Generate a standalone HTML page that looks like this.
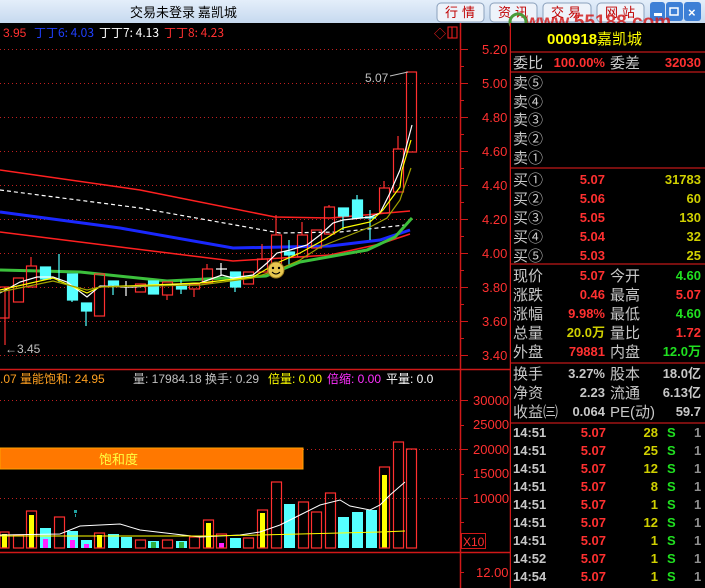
<!DOCTYPE html>
<html><head><meta charset="utf-8"><style>
html,body{margin:0;padding:0;background:#000;width:705px;height:588px;overflow:hidden}
svg{display:block}
text{font-family:"Liberation Sans","Noto Sans CJK SC",sans-serif}
.c{font-family:"Noto Sans CJK SC","WenQuanYi Zen Hei",sans-serif}
</style></head><body>
<svg width="705" height="588" viewBox="0 0 705 588" xmlns="http://www.w3.org/2000/svg">
<defs><linearGradient id="tb" x1="0" y1="0" x2="0" y2="1"><stop offset="0" stop-color="#e4eefa"/><stop offset="1" stop-color="#c6d9ef"/></linearGradient></defs>
<rect width="705" height="588" fill="#000"/>
<!-- title bar -->
<rect x="0" y="0" width="705" height="23" fill="url(#tb)"/>
<text x="130" y="17" font-size="13" fill="#000" class="c">交易未登录 嘉凯城</text>
<g font-size="13" fill="#c00000" class="c">
<rect x="437" y="3" width="47" height="19" rx="4" fill="#eef3fa" stroke="#8aa0bc"/><text x="445" y="17" letter-spacing="4">行情</text>
<rect x="490" y="3" width="47" height="19" rx="4" fill="#eef3fa" stroke="#8aa0bc"/><text x="498" y="17" letter-spacing="4">资讯</text>
<rect x="543" y="3" width="48" height="19" rx="4" fill="#eef3fa" stroke="#8aa0bc"/><text x="551" y="17" letter-spacing="4">交易</text>
<rect x="597" y="3" width="47" height="19" rx="4" fill="#eef3fa" stroke="#8aa0bc"/><text x="605" y="17" letter-spacing="4">网站</text>
</g>
<rect x="650" y="2" width="15" height="19" rx="3" fill="#3d7fd6"/><rect x="654" y="13" width="8" height="3" fill="#fff"/>
<rect x="666" y="2" width="17" height="19" rx="3" fill="#3d7fd6"/><rect x="670" y="8" width="8" height="7" fill="none" stroke="#fff" stroke-width="1.5"/>
<rect x="684" y="2" width="17" height="19" rx="3" fill="#3d7fd6"/><text x="688" y="17" font-size="13" fill="#fff" font-weight="bold">×</text>
<text x="525" y="28" font-size="19" font-weight="bold" fill="#d42020" opacity="0.85">www.55188.com</text>
<circle cx="518" cy="22" r="8" fill="none" stroke="#4a9a3a" stroke-width="3"/>

<!-- main chart header -->
<g font-size="12">
<text x="3" y="37" fill="#ff3030">3.95</text>
<text x="34" y="37" fill="#2040ff" class="c">丁丁6: 4.03</text>
<text x="99" y="37" fill="#fff" class="c">丁丁7: 4.13</text>
<text x="164" y="37" fill="#ff3030" class="c">丁丁8: 4.23</text>
</g>
<text x="434" y="38" font-size="12" fill="#ff2020">◇</text>
<rect x="448" y="27" width="9" height="11" fill="none" stroke="#ff2020"/><line x1="452" y1="27" x2="452" y2="38" stroke="#ff2020"/>

<!-- grid -->
<g stroke="#c02020" stroke-dasharray="1,3" stroke-width="1">
<line x1="0" y1="49.5" x2="460" y2="49.5"/><line x1="0" y1="83.5" x2="460" y2="83.5"/><line x1="0" y1="117.5" x2="460" y2="117.5"/><line x1="0" y1="151.5" x2="460" y2="151.5"/><line x1="0" y1="185.5" x2="460" y2="185.5"/><line x1="0" y1="219.5" x2="460" y2="219.5"/><line x1="0" y1="253.5" x2="460" y2="253.5"/><line x1="0" y1="287.5" x2="460" y2="287.5"/><line x1="0" y1="321.5" x2="460" y2="321.5"/><line x1="0" y1="355.5" x2="460" y2="355.5"/>
<line x1="0" y1="400.5" x2="460" y2="400.5"/><line x1="303" y1="449.5" x2="460" y2="449.5"/><line x1="0" y1="498.5" x2="460" y2="498.5"/>
</g>
<!-- axis -->
<g stroke="#d01818" stroke-width="1.5">
<line x1="460.5" y1="23" x2="460.5" y2="588"/>
<line x1="510.5" y1="23" x2="510.5" y2="588"/>
<line x1="0" y1="369.5" x2="510" y2="369.5"/>
<line x1="0" y1="552.5" x2="510" y2="552.5"/>
</g>
<g stroke="#d01818">
<path d="M460 49.5h8M460 66.5h4M460 83.5h8M460 100.5h4M460 117.5h8M460 134.5h4M460 151.5h8M460 168.5h4M460 185.5h8M460 202.5h4M460 219.5h8M460 236.5h4M460 253.5h8M460 270.5h4M460 287.5h8M460 304.5h4M460 321.5h8M460 338.5h4M460 355.5h8M460 400.5h8M460 425.5h4M460 449.5h8M460 474.5h4M460 498.5h8M460 522.5h4M460 572.5h4"/>
</g>
<g font-size="13" fill="#ff3030">
<text x="482" y="54">5.20</text><text x="482" y="88">5.00</text><text x="482" y="122">4.80</text><text x="482" y="156">4.60</text><text x="482" y="190">4.40</text><text x="482" y="224">4.20</text><text x="482" y="258">4.00</text><text x="482" y="292">3.80</text><text x="482" y="326">3.60</text><text x="482" y="360">3.40</text>
<text x="473" y="405">30000</text><text x="473" y="429">25000</text><text x="473" y="454">20000</text><text x="473" y="478">15000</text><text x="473" y="503">10000</text>
<text x="476" y="577">12.00</text>
</g>
<rect x="461.5" y="533.5" width="24" height="15" fill="none" stroke="#d01818"/><text x="463" y="546" font-size="12" fill="#ff3030">X10</text>

<!-- long MAs -->
<polyline points="0,170 140,190 275,217 330,218 410,211" fill="none" stroke="#ff2020" stroke-width="1.5"/>
<polyline points="0,190 140,208 280,233 340,232 405,225" fill="none" stroke="#fff" stroke-width="1.2" stroke-dasharray="4,3"/>
<polyline points="0,212 120,228 233,248 330,246 380,240 410,230" fill="none" stroke="#1a28ff" stroke-width="3"/>
<polyline points="0,232 120,247 233,261 330,255 380,244 410,234" fill="none" stroke="#ff2020" stroke-width="1.5"/>
<polyline points="0,270 80,272 167,281 266,276 300,262 367,250 395,237 412,218" fill="none" stroke="#3cc03c" stroke-width="3"/>

<!-- candles -->
<g stroke-width="1.2">
<g stroke="#ff3030" fill="none">
<line x1="5" y1="287" x2="5" y2="345"/><rect x="-1" y="287" width="10" height="31"/>
<rect x="13.5" y="278" width="10" height="24"/>
<line x1="31" y1="257" x2="31" y2="266"/><rect x="26.5" y="266" width="10" height="21"/>
<rect x="94.5" y="274" width="10" height="42"/>
<rect x="135.5" y="284" width="10" height="8"/>
<line x1="167" y1="295" x2="167" y2="300"/><rect x="162.5" y="282" width="10" height="13"/>
<line x1="194" y1="289" x2="194" y2="297"/><rect x="189.5" y="284" width="10" height="5"/>
<line x1="207" y1="264" x2="207" y2="269"/><rect x="202.5" y="269" width="10" height="14"/>
<rect x="243.5" y="272" width="10" height="12"/>
<line x1="262" y1="244" x2="262" y2="259"/><rect x="257.5" y="259" width="10" height="13"/>
<line x1="276" y1="215" x2="276" y2="235"/><rect x="271.5" y="235" width="10" height="33"/>
<line x1="302" y1="222" x2="302" y2="235"/><rect x="297.5" y="235" width="10" height="22"/>
<rect x="311.5" y="230" width="10" height="18"/>
<line x1="329" y1="205" x2="329" y2="207"/><rect x="324.5" y="207" width="10" height="27"/>
<line x1="384" y1="181" x2="384" y2="188"/><rect x="379.5" y="188" width="10" height="25"/>
<line x1="398" y1="136" x2="398" y2="149"/><rect x="393.5" y="149" width="10" height="43"/>
<rect x="406.5" y="72" width="10" height="80"/>
</g>
<g stroke="#55ffff" fill="#55ffff">
<line x1="59" y1="254" x2="59" y2="282"/><rect x="40.5" y="267" width="10" height="12"/>
<line x1="72" y1="274" x2="72" y2="302"/><rect x="67.5" y="274" width="10" height="26"/>
<line x1="86" y1="303" x2="86" y2="326"/><rect x="81.5" y="303" width="10" height="8"/>
<line x1="113" y1="281" x2="113" y2="295"/><rect x="108.5" y="281" width="10" height="4"/>
<rect x="148.5" y="281" width="10" height="13"/>
<line x1="181" y1="280" x2="181" y2="294"/><rect x="176.5" y="286" width="10" height="3"/>
<line x1="235" y1="272" x2="235" y2="292"/><rect x="230.5" y="272" width="10" height="15"/>
<line x1="289" y1="240" x2="289" y2="265"/><rect x="284.5" y="252" width="10" height="3"/>
<line x1="343" y1="208" x2="343" y2="230"/><rect x="338.5" y="208" width="10" height="8"/>
<line x1="357" y1="195" x2="357" y2="200"/><rect x="352.5" y="200" width="10" height="18"/>
<line x1="370" y1="210" x2="370" y2="240"/><rect x="365.5" y="217" width="10" height="1"/>
</g>
<g stroke="#fff"><path d="M121 287h11M126 281v15M216 269h11M221 263v13"/></g>
</g>
<!-- short MAs -->
<polyline points="0,293 20,282 37,277 53,277 67,282 87,297 100,286 133,287 200,283 222,275 233,278 253,275 267,263 277,253 290,250 307,245 320,235 333,223 343,220 370,217 380,213 390,193 400,170 402,163 412,125" fill="none" stroke="#fff" stroke-width="1.2"/>
<polyline points="0,290 53,278 87,293 100,287 200,283 253,277 277,263 300,253 320,242 343,228 370,222 383,210 400,187 402,170 411,140" fill="none" stroke="#ffff00" stroke-width="1.2"/>
<polyline points="0,292 53,281 87,290 100,287 200,285 253,278 277,270 300,260 320,247 370,227 387,218 400,200 405,185 411,168" fill="none" stroke="#a0a000" stroke-width="1.2"/>
<circle cx="276" cy="270" r="8" fill="#e8c850" stroke="#a08020"/><circle cx="273" cy="268" r="1.2" fill="#000"/><circle cx="279" cy="268" r="1.2" fill="#000"/><path d="M272 272q4 4 8 0" stroke="#000" fill="none"/>
<text x="5" y="353" font-size="12" fill="#c0c0c0">←3.45</text>
<text x="365" y="82" font-size="12" fill="#c0c0c0">5.07</text><line x1="390" y1="76" x2="408" y2="72" stroke="#c0c0c0"/>

<!-- volume header -->
<g font-size="12" class="c">
<text x="0" y="383" fill="#ffa020">.07 量能饱和: 24.95</text>
<text x="133" y="383" fill="#c0c0c0">量: 17984.18 换手: 0.29</text>
<text x="268" y="383" fill="#ffff00">倍量: 0.00</text>
<text x="327" y="383" fill="#ff30ff">倍缩: 0.00</text>
<text x="386" y="383" fill="#fff">平量: 0.0</text>
</g>
<rect x="0" y="448" width="303" height="21" fill="#ff7800" stroke="#ffa000"/>
<text x="99" y="464" font-size="13" fill="#ffff40" class="c">饱和度</text>
<!-- volume bars -->
<g stroke-width="1.2">
<g fill="#55ffff">
<rect x="40" y="528" width="11" height="20"/><rect x="67" y="531" width="11" height="17"/><rect x="81" y="540" width="11" height="8"/><rect x="108" y="534" width="11" height="14"/><rect x="121" y="537" width="11" height="11"/><rect x="148" y="541" width="11" height="7"/><rect x="176" y="541" width="11" height="7"/><rect x="230" y="538" width="11" height="10"/><rect x="284" y="504" width="11" height="44"/><rect x="338" y="517" width="11" height="31"/><rect x="352" y="512" width="11" height="36"/><rect x="366" y="510" width="11" height="38"/>
</g>
<g fill="#ff20ff"><rect x="43" y="539" width="5" height="9"/><rect x="70" y="540" width="5" height="8"/><rect x="84" y="544" width="5" height="4"/><rect x="219" y="543" width="5" height="5"/></g>
<g fill="#30b040"><rect x="151" y="542" width="5" height="6"/><rect x="179" y="542" width="5" height="6"/></g>
<g fill="#ffff00"><rect x="2" y="534" width="5" height="14"/><rect x="29" y="515" width="5" height="33"/><rect x="97" y="535" width="5" height="13"/><rect x="206" y="523" width="5" height="25"/><rect x="260" y="513" width="5" height="35"/><rect x="382" y="475" width="5" height="73"/></g>
<g fill="none" stroke="#ff3030">
<rect x="0" y="532" width="9" height="16"/><rect x="13.5" y="535" width="10" height="13"/><rect x="26.5" y="511" width="10" height="37"/><rect x="54.5" y="517" width="10" height="31"/><rect x="94.5" y="533" width="10" height="15"/><rect x="135.5" y="540" width="10" height="8"/><rect x="162.5" y="540" width="10" height="8"/><rect x="189.5" y="537" width="10" height="11"/><rect x="203.5" y="520" width="10" height="28"/><rect x="216.5" y="534" width="10" height="14"/><rect x="243.5" y="538" width="10" height="10"/><rect x="257.5" y="510" width="10" height="38"/><rect x="271.5" y="482" width="10" height="66"/><rect x="298.5" y="502" width="10" height="46"/><rect x="311.5" y="512" width="10" height="36"/><rect x="325.5" y="493" width="10" height="55"/><rect x="379.5" y="467" width="10" height="81"/><rect x="393.5" y="442" width="10" height="106"/><rect x="406.5" y="449" width="10" height="99"/>
</g>
</g>
<polyline points="0,535 60,534 80,526 120,524 140,530 200,537 240,535 260,532 280,525 300,515 320,505 340,500 350,506 370,510 380,505 390,495 405,482" fill="none" stroke="#fff" stroke-width="1"/>
<polyline points="0,536 200,536 260,535 300,534 340,533 380,532 405,531" fill="none" stroke="#ffff00" stroke-width="1"/>
<rect x="74" y="510" width="3" height="3" fill="#20a0a0"/><rect x="75" y="514" width="1" height="3" fill="#20a0a0"/>

<!-- right panel -->
<rect x="511" y="23" width="194" height="565" fill="#000"/>
<text x="547" y="44" font-size="15" font-weight="bold" fill="#ffff00">000918</text>
<text x="597" y="44" font-size="15" fill="#ffff00" class="c">嘉凯城</text>
<g stroke="#c01818" stroke-width="1.2">
<line x1="511" y1="52" x2="705" y2="52"/><line x1="511" y1="72" x2="705" y2="72"/><line x1="511" y1="168" x2="705" y2="168"/><line x1="511" y1="264" x2="705" y2="264"/><line x1="511" y1="363" x2="705" y2="363"/><line x1="511" y1="423" x2="705" y2="423"/>
</g>
<g font-size="15" fill="#c8c8c8" class="c">
<text x="513" y="68">委比</text><text x="610" y="68">委差</text>
<text x="513" y="88">卖⑤</text><text x="513" y="107">卖④</text><text x="513" y="125">卖③</text><text x="513" y="144">卖②</text><text x="513" y="163">卖①</text>
<text x="513" y="185">买①</text><text x="513" y="204">买②</text><text x="513" y="223">买③</text><text x="513" y="242">买④</text><text x="513" y="261">买⑤</text>
<text x="513" y="281">现价</text><text x="610" y="281">今开</text>
<text x="513" y="300">涨跌</text><text x="610" y="300">最高</text>
<text x="513" y="319">涨幅</text><text x="610" y="319">最低</text>
<text x="513" y="338">总量</text><text x="610" y="338">量比</text>
<text x="513" y="357">外盘</text><text x="610" y="357">内盘</text>
<text x="513" y="379">换手</text><text x="610" y="379">股本</text>
<text x="513" y="398">净资</text><text x="610" y="398">流通</text>
<text x="513" y="417">收益㈢</text><text x="610" y="417">PE(动)</text>
</g>
<g font-size="13" font-weight="bold" text-anchor="end">
<text x="605" y="67" fill="#ff3030">100.00%</text><text x="701" y="67" fill="#ff3030">32030</text>
<g fill="#ff3030"><text x="605" y="184">5.07</text><text x="605" y="203">5.06</text><text x="605" y="222">5.05</text><text x="605" y="241">5.04</text><text x="605" y="260">5.03</text></g>
<g fill="#d0d000"><text x="701" y="184">31783</text><text x="701" y="203">60</text><text x="701" y="222">130</text><text x="701" y="241">32</text><text x="701" y="260">25</text></g>
<text x="605" y="280" fill="#ff3030">5.07</text><text x="701" y="280" fill="#20e020">4.60</text>
<text x="605" y="299" fill="#ff3030">0.46</text><text x="701" y="299" fill="#ff3030">5.07</text>
<text x="605" y="318" fill="#ff3030">9.98%</text><text x="701" y="318" fill="#20e020">4.60</text>
<text x="605" y="337" fill="#d0d000">20.0万</text><text x="701" y="337" fill="#ff3030">1.72</text>
<text x="605" y="356" fill="#ff3030">79881</text><text x="701" y="356" fill="#20e020">12.0万</text>
<text x="605" y="378" fill="#c8c8c8">3.27%</text><text x="701" y="378" fill="#c8c8c8">18.0亿</text>
<text x="605" y="397" fill="#c8c8c8">2.23</text><text x="701" y="397" fill="#c8c8c8">6.13亿</text>
<text x="605" y="416" fill="#c8c8c8">0.064</text><text x="701" y="416" fill="#c8c8c8">59.7</text>
</g>
<g font-size="13" font-weight="bold">
<g fill="#c8c8c8"><text x="513" y="437">14:51</text><text x="513" y="455">14:51</text><text x="513" y="473">14:51</text><text x="513" y="491">14:51</text><text x="513" y="509">14:51</text><text x="513" y="527">14:51</text><text x="513" y="545">14:51</text><text x="513" y="563">14:52</text><text x="513" y="581">14:54</text></g>
<g fill="#ff3030" text-anchor="end"><text x="606" y="437">5.07</text><text x="606" y="455">5.07</text><text x="606" y="473">5.07</text><text x="606" y="491">5.07</text><text x="606" y="509">5.07</text><text x="606" y="527">5.07</text><text x="606" y="545">5.07</text><text x="606" y="563">5.07</text><text x="606" y="581">5.07</text></g>
<g fill="#d0d000" text-anchor="end"><text x="658" y="437">28</text><text x="658" y="455">25</text><text x="658" y="473">12</text><text x="658" y="491">8</text><text x="658" y="509">1</text><text x="658" y="527">12</text><text x="658" y="545">1</text><text x="658" y="563">1</text><text x="658" y="581">1</text></g>
<g fill="#20e020"><text x="667" y="437">S</text><text x="667" y="455">S</text><text x="667" y="473">S</text><text x="667" y="491">S</text><text x="667" y="509">S</text><text x="667" y="527">S</text><text x="667" y="545">S</text><text x="667" y="563">S</text><text x="667" y="581">S</text></g>
<g fill="#909090"><text x="694" y="437">1</text><text x="694" y="455">1</text><text x="694" y="473">1</text><text x="694" y="491">1</text><text x="694" y="509">1</text><text x="694" y="527">1</text><text x="694" y="545">1</text><text x="694" y="563">1</text><text x="694" y="581">1</text></g>
</g>
</svg>
</body></html>
